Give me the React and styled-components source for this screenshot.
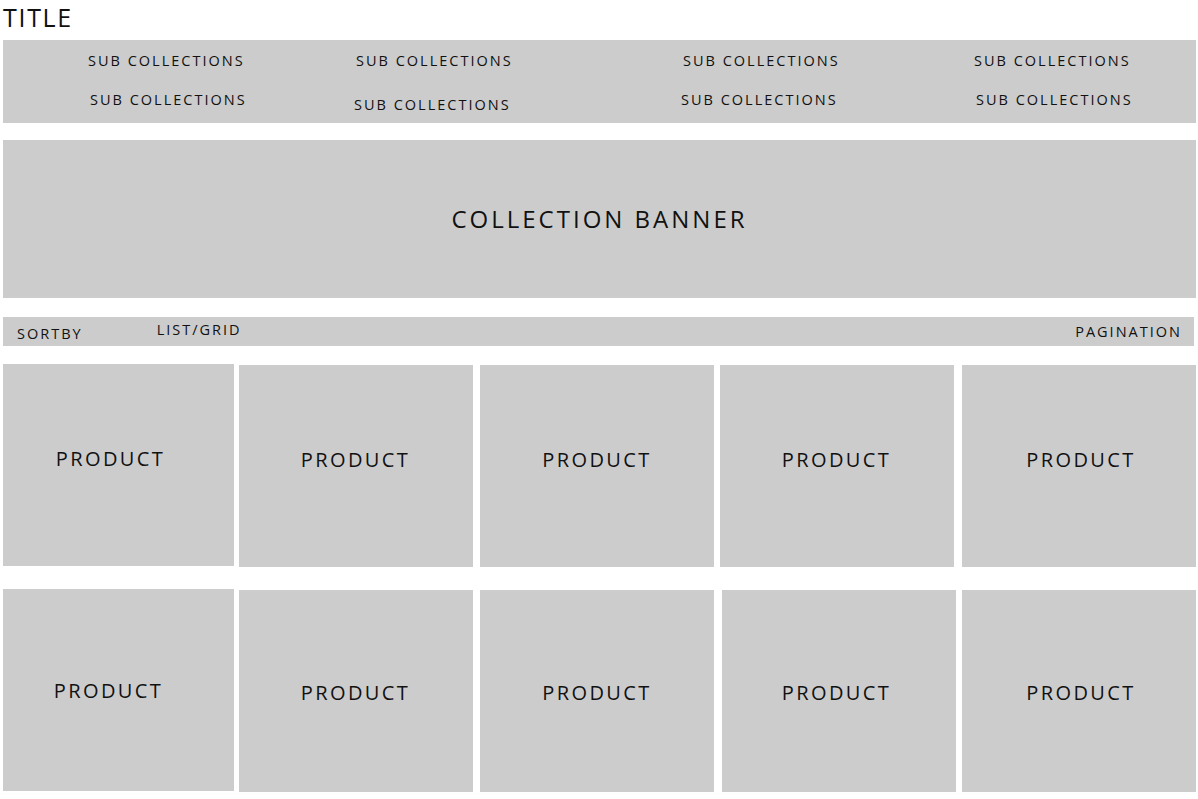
import React from "react";
import styled, { createGlobalStyle } from "styled-components";

const GlobalStyle = createGlobalStyle`
  html, body {
    margin: 0;
    padding: 0;
    background: #fff;
  }
  body {
    font-family: "Open Sans", "DejaVu Sans", sans-serif;
    color: #111;
  }
`;

const Page = styled.div`
  width: 1198px;
  padding: 0 2px 0 3px;
  box-sizing: border-box;
  display: flex;
  flex-direction: column;
`;

const Title = styled.h1`
  margin: 0;
  height: 40px;
  padding-top: 2px;
  box-sizing: border-box;
  font-size: 25px;
  font-weight: 400;
  letter-spacing: 1.7px;
  line-height: 30px;
`;

const SubBox = styled.div`
  background: #cccccc;
  height: 83px;
  box-sizing: border-box;
  padding: 12px 0 0 0;
  display: grid;
  grid-template-columns: 85px 268px 327px 291px 1fr;
  grid-template-rows: 18px 18px;
  row-gap: 21px;
`;

const SubItem = styled.span`
  grid-column: ${(p) => p.$col + 1};
  grid-row: ${(p) => p.$row};
  font-size: 14.5px;
  line-height: 18px;
  letter-spacing: 2px;
  white-space: nowrap;
  transform: translate(${(p) => p.$dx || 0}px, ${(p) => p.$dy || 0}px);
`;

const Banner = styled.div`
  margin-top: 17px;
  background: #cccccc;
  height: 158px;
  display: flex;
  align-items: center;
  justify-content: center;
  font-size: 24px;
  letter-spacing: 3px;
  padding-bottom: 2px;
  box-sizing: border-box;
`;

const Toolbar = styled.div`
  margin-top: 19px;
  margin-right: 2px;
  background: #cccccc;
  height: 29px;
  display: flex;
  align-items: center;
  padding: 0 12px 0 14px;
  font-size: 14.5px;
  letter-spacing: 2px;
`;

const ToolItem = styled.span`
  line-height: 18px;
  margin-left: ${(p) => p.$ml || 0}px;
  ${(p) => (p.$push ? "margin-left: auto;" : "")}
  transform: translateY(${(p) => p.$dy || 0}px);
`;

const Grid = styled.div`
  margin-top: 19px;
  display: grid;
  grid-template-columns: 231px 234px 234px 234px 234px;
  grid-auto-rows: 202px;
  column-gap: 6.5px;
  row-gap: 23px;
`;

const Card = styled.div`
  background: #cccccc;
  display: flex;
  align-items: center;
  justify-content: center;
  font-size: 20px;
  letter-spacing: 2.4px;
  transform: translate(${(p) => p.$sx || 0}px, ${(p) => p.$sy || 0}px);
`;

const CardLabel = styled.span`
  transform: translate(${(p) => p.$dx || 0}px, ${(p) => p.$dy || 0}px);
`;

const subs = [
  { row: 1, col: 1, dx: 0, dy: 0 },
  { row: 1, col: 2, dx: 0, dy: 0 },
  { row: 1, col: 3, dx: 0, dy: 0 },
  { row: 1, col: 4, dx: 0, dy: 0 },
  { row: 2, col: 1, dx: 2, dy: 0 },
  { row: 2, col: 2, dx: -2, dy: 5 },
  { row: 2, col: 3, dx: -2, dy: 0 },
  { row: 2, col: 4, dx: 2, dy: 0 },
];

const products = [
  { dx: -8, dy: -7, sy: -1 },
  { dx: 0, dy: -7, sx: -2 },
  { dx: 0, dy: -7, sx: -1 },
  { dx: 0, dy: -7, sx: -2 },
  { dx: 2, dy: -7 },
  { dx: -10, dy: 0, sy: -1 },
  { dx: 0, dy: 1, sx: -2 },
  { dx: 0, dy: 1, sx: -1 },
  { dx: -2, dy: 1 },
  { dx: 2, dy: 1 },
];

export default function App() {
  return (
    <>
      <GlobalStyle />
      <Page>
        <Title>TITLE</Title>
        <SubBox>
          {subs.map((s, i) => (
            <SubItem key={i} $row={s.row} $col={s.col} $dx={s.dx} $dy={s.dy}>
              SUB COLLECTIONS
            </SubItem>
          ))}
        </SubBox>
        <Banner>COLLECTION BANNER</Banner>
        <Toolbar>
          <ToolItem $dy={2}>SORTBY</ToolItem>
          <ToolItem $ml={74} $dy={-2}>LIST/GRID</ToolItem>
          <ToolItem $push $dy={0}>PAGINATION</ToolItem>
        </Toolbar>
        <Grid>
          {products.map((p, i) => (
            <Card key={i} $sx={p.sx} $sy={p.sy}>
              <CardLabel $dx={p.dx} $dy={p.dy}>PRODUCT</CardLabel>
            </Card>
          ))}
        </Grid>
      </Page>
    </>
  );
}
